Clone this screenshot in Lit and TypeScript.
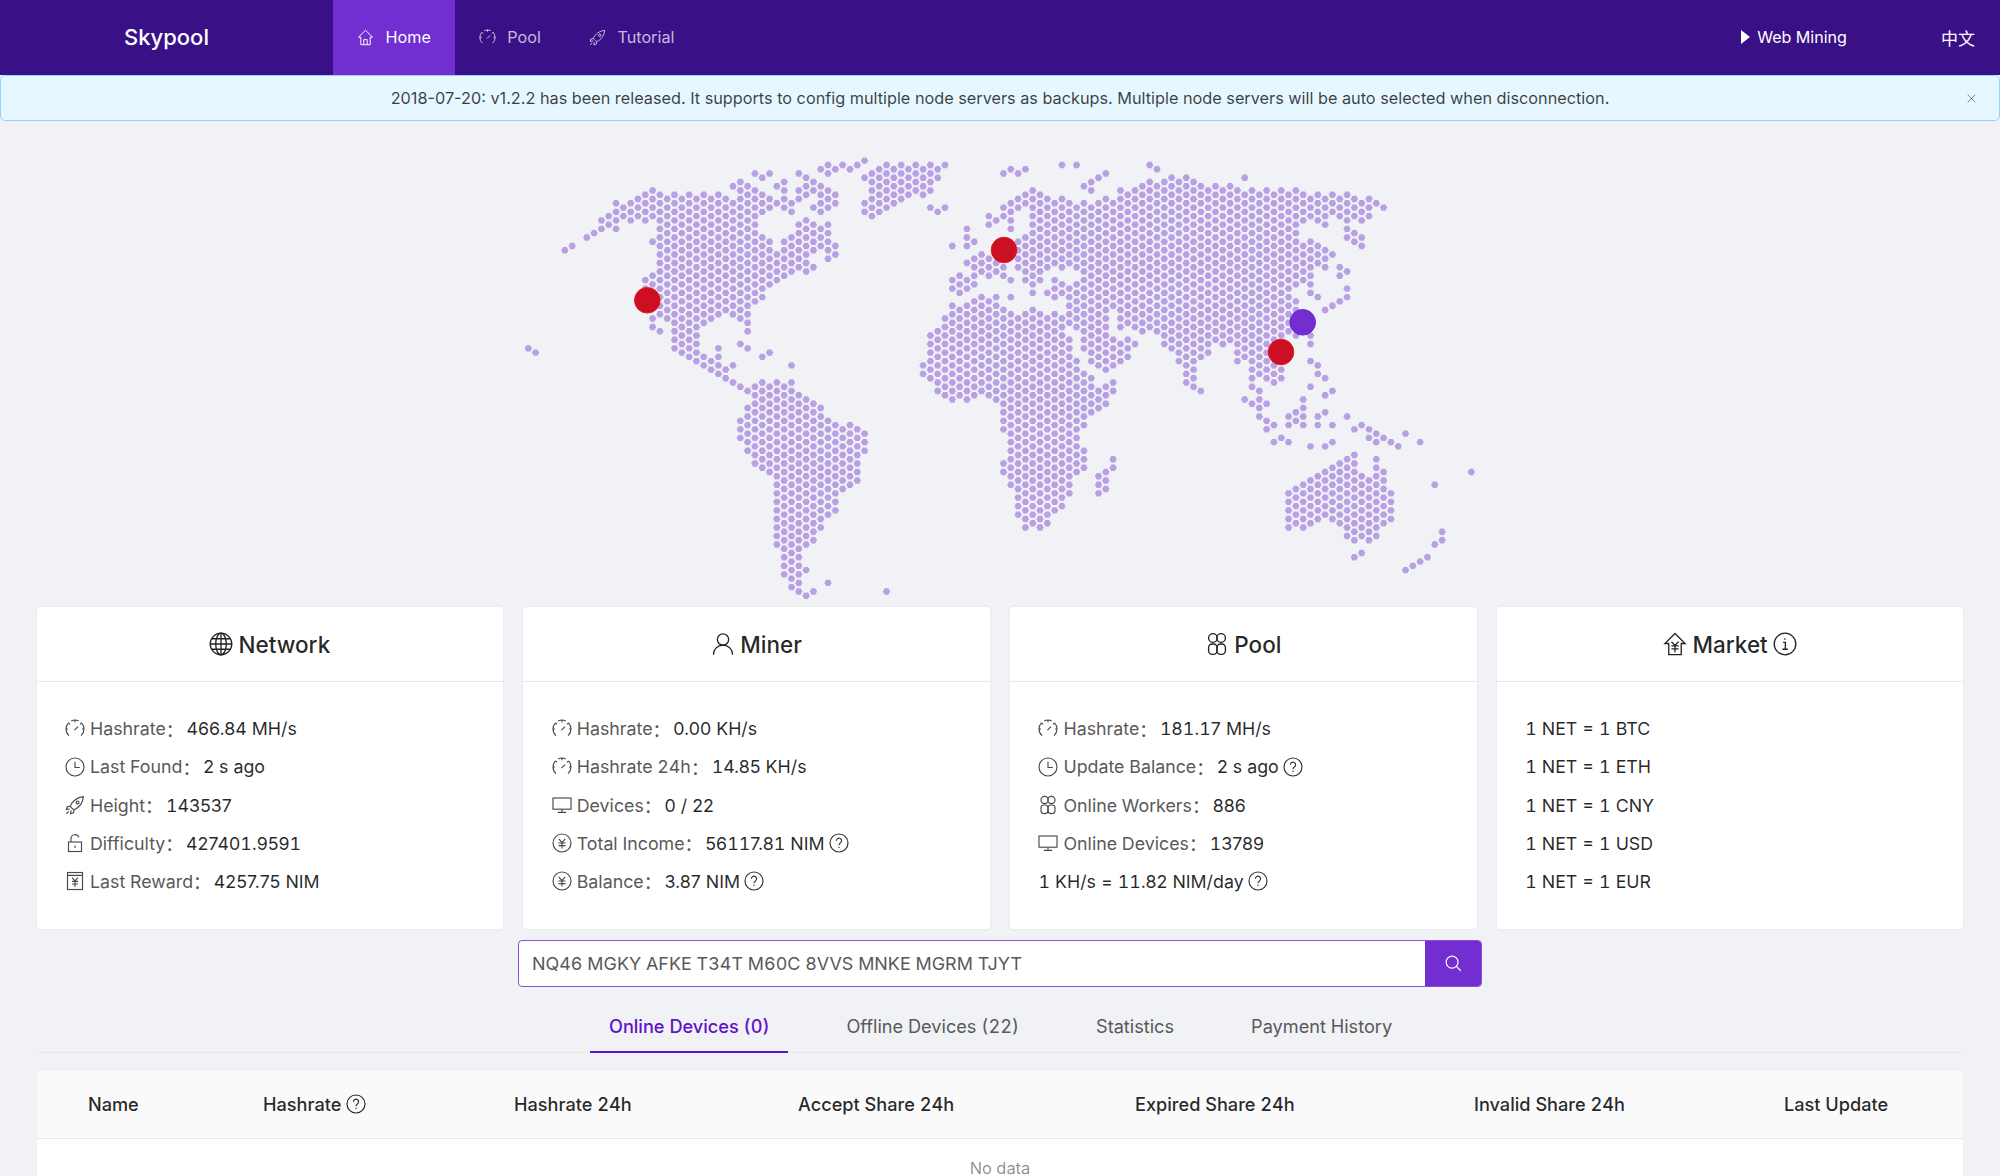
import { LitElement, html, css, svg, TemplateResult, SVGTemplateResult } from "lit";
import { customElement } from "lit/decorators.js";

const yen = svg`<path d="M6.8 5.8 10 9.6l3.2-3.8M6.5 10h7M6.5 12.6h7M10 9.6V15.5" />`;

const ICONS: Record<string, SVGTemplateResult> = {
  home: svg`<path d="M10 1.5 1.8 9.6h2.7V18.5h11V9.6h2.7zM8 18.5v-6h4v6" />`,
  gauge: svg`<path d="M3.9 16.6A9 9 0 0 1 1 10a9 9 0 0 1 2.5-6.2M6.2 1.9a9 9 0 0 1 7.6 0M16.5 3.8A9 9 0 0 1 19 10a9 9 0 0 1-2.9 6.6M1 10h2M17 10h2M3.5 3.8 5 5.3M16.5 3.8 15 5.3M10 1v2.2M9.4 11.2 13 7.6" />`,
  clock: svg`<circle cx="10" cy="10" r="9" /><path d="M10 4.8v5.7h4.8" />`,
  rocket: svg`<path d="M6.9 13.2 5 11.2C7.6 5.8 12 2.4 18.4 1.6 17.8 8 14.4 12.4 9 15zM5 11.2l-2.7.6L1.4 14.6l3.4-.6M9 15l-.5 2.8-2.9.9.5-3.3M1.3 18.8l2.4-2.4" /><circle cx="12.6" cy="7.4" r="1.4" />`,
  unlock: svg`<rect x="3.5" y="9" width="13" height="9.5" /><path d="M6 9V5.6a4 4 0 0 1 7.8-1.2M10 12.6v2.4" />`,
  receipt: svg`<rect x="2.5" y="1.5" width="15" height="17" /><path d="M2.5 4.4h15M7 6.6l3 3.4 3-3.4M7 10.4h6M7 13h6M10 10v6" />`,
  globe: svg`<circle cx="10" cy="10" r="9" /><ellipse cx="10" cy="10" rx="4.4" ry="9" /><path d="M1 10h18M2.2 5.6h15.6M2.2 14.4h15.6M10 1v18" />`,
  user: svg`<circle cx="10" cy="6.2" r="4.7" /><path d="M2 19c0-4.6 3.4-8.1 8-8.1s8 3.5 8 8.1" />`,
  team: svg`<circle cx="6.6" cy="5" r="3.6" /><circle cx="13.4" cy="5" r="3.6" /><rect x="3" y="10" width="7" height="8.6" rx="3" /><rect x="10" y="10" width="7" height="8.6" rx="3" />`,
  desktop: svg`<rect x="1" y="3" width="18" height="11.2" /><path d="M10 14.2V17M5.8 17.4h8.4" />`,
  yencircle: svg`<circle cx="10" cy="10" r="9" />${yen}`,
  question: svg`<circle cx="10" cy="10" r="9" /><path d="M7.4 7.7a2.6 2.6 0 1 1 4 2.2c-.9.6-1.4 1.1-1.4 2.3M10 13.8v1.2" />`,
  market: svg`<path d="M10 1.2 1.6 9.6h3.2v9.2h10.4V9.6h3.2zM7 8.2l3 3 3-3M7 11.6h6M7 14h6M10 11.2v5.6" />`,
  info: svg`<circle cx="10" cy="10" r="9" /><path d="M8.4 8.6h1.9v5.6M7.8 14.4h4.6M10 5.2v1.2" />`,
  search: svg`<circle cx="9" cy="9" r="6.6" /><path d="m13.8 13.8 4.8 4.8" />`,
  close: svg`<path d="m3 3 14 14M17 3 3 17" />`,
};

function icon(name: string, size: number, sw = 1.15): TemplateResult {
  return html`<svg
    class="icon"
    viewBox="0 0 20 20"
    width=${size}
    height=${size}
    fill="none"
    stroke="currentColor"
    stroke-width=${sw}
  >
    ${ICONS[name]}
  </svg>`;
}

// one string per dot row, "a-b" means every second column from a to b
const MAP_ROWS = [
  "46",
  "41 43 45 49-57 73 75 85",
  "40 42 44 48-56 66 68 86",
  "31 33 37 41 47-55 65 67 79",
  "32 38 46-56 78 88 90 98",
  "29 35 39 47-55 77 85-91",
  "28 30 34 38 40 48-54 76 84-96",
  "17 29 31 35 37 39 41 47-55 69 77 81-105",
  "16-26 30 32 38 40 42 48-54 68 70 82-112",
  "15-27 29-33 35 37 41 47-51 67-71 73 79 81-115",
  "12-36 40 42 46-50 66-116",
  "13-35 39 41 47 49 55 57 65 67 69-117",
  "12-32 36 40 46 48 56 66 70-114",
  "11-31 47 63 65 69-115",
  "10-30 38 64 66 70-106 108 112 114",
  "11 19-31 37 39 41 63 69-105 109",
  "10 12 18-30 38 40 60 66 70-104 112",
  "9 19-31 37 39 41 69-105 113",
  "8 18-32 36 38 40 60 68-104 112 114",
  "17 19-31 33 35 37 39 41 61 67-105 107 113",
  "6 18-32 36-42 58 60 68-106 108 114",
  "5 19-33 35-41 65-105 107 109",
  "18-34 36 38 42 62-110",
  "19-37 41 61-109",
  "18-38 60-64 68-108",
  "19-39 61 63 65-73 75-109 111",
  "18-38 62 64 68 70 76-106 112",
  "17-35 59 61 63 65 69 77-107 111",
  "16-34 58 60 66 68 70 72 76-106",
  "17-33 59 61 69 73-107",
  "16-32 58 60 72-104 112",
  "19-31 59 69-103 107",
  "18-32 62 64 66 72-104 108 112",
  "19-31 61 63 75-105 111",
  "18-30 58-64 74-104 110",
  "19-29 59-65 69 75-105 109",
  "18-26 28 30 58-72 74-78 82-104",
  "17-25 29 57-73 75-79 81-105",
  "20-24 30 58-72 74-78 82-106",
  "17 21 23 57-73 75-79 81 83 85-105",
  "18 20 22 30 56-72 76 78 84 86-104",
  "21 23 55-73 77 79 87-105 107",
  "20 22 56-74 76-82 88-102",
  "21 23 29 55-73 77-83 87-93 95 97-101 107",
  "0 20 22 26 30 56-74 76-82 88-92 98 100 102",
  "1 21 23 33 55-73 77-81 89 91 93 97-101",
  "22 24 26 32 56-74 78-82 90 92 98 100",
  "23 25 55-75 77-81 89 91 97-103 107",
  "24 26 28 36 54-74 78 80 90 100 102 108",
  "25 27 55-75 79 91 99-103",
  "26 54-76 90 100 102 108",
  "27 55-77 91 99-103 109",
  "28 32 34 36 56-76 80 90 102",
  "29-35 57-77 79 91 99 107",
  "30-36 56-78 80 92 100 110",
  "31-37 57-79 109",
  "32-38 58 60 64-78 98 100 106",
  "31-39 65-79 99 101",
  "30-40 66-78 100 106",
  "31-39 65-77 105 109",
  "30-40 66-76 100 104 106 108 112",
  "29-41 65-75 101 105",
  "30-42 44 66-76 102 104 106 108 110 114",
  "29-43 45 65-75 101 113 115",
  "30-46 66-74 116 120",
  "29-45 67-75 103 115 117",
  "30-46 66-74 102 104 110 116 118 122",
  "31-45 67-75 107 109 119",
  "30-46 66-76",
  "31-45 67-75 113",
  "32-44 66-76 80 112 116",
  "31-45 65-75 111 113",
  "32-44 66-76 80 110 112 116",
  "33-45 65-75 79 109-113 117 129",
  "34-44 66-74 78 108-114 116",
  "35-45 67-73 79 107-115 117",
  "34-44 66-74 78 106-116 124",
  "35-43 67-73 79 105-117",
  "34-42 68-74 78 104-118",
  "35-41 67-73 105-117",
  "34-42 68-72 104-118",
  "35-41 67-73 105-117",
  "34-42 68-72 104-118",
  "35-41 67-71 105-117",
  "34-40 68 70 104-108 110-118",
  "35-39 69 71 105 107 111-117",
  "34-40 68 70 104 106 112-116",
  "35-39 113 115 125",
  "34-38 112-116",
  "35-39 113 115 125",
  "34-38 124",
  "35 37",
  "36 114",
  "35 37 113 123",
  "36 122",
  "35 37 121",
  "36 38 120",
  "35 37",
  "36",
  "37 41",
  "36",
  "37 39 49",
  "38",
];

function dotsPath(): string {
  const parts: string[] = [];
  MAP_ROWS.forEach((row, r) => {
    for (const token of row.split(" ")) {
      const [from, to] = token.split("-").map(Number);
      for (let c = from; c <= (to ?? from); c += 2) {
        const x = (528.33 + c * 7.31).toFixed(2);
        const y = (160.67 + r * 4.265).toFixed(2);
        parts.push(`M${x} ${y}m-3.7 0l1.85-3.2h3.7l1.85 3.2l-1.85 3.2h-3.7z`);
      }
    }
  });
  return parts.join("");
}

interface Row {
  icon?: string;
  label?: string;
  value: string;
  help?: boolean;
}

interface Card {
  icon: string;
  title: string;
  titleInfo?: boolean;
  rows: Row[];
}

const CARDS: Card[] = [
  {
    icon: "globe",
    title: "Network",
    rows: [
      { icon: "gauge", label: "Hashrate", value: "466.84 MH/s" },
      { icon: "clock", label: "Last Found", value: "2 s ago" },
      { icon: "rocket", label: "Height", value: "143537" },
      { icon: "unlock", label: "Difficulty", value: "427401.9591" },
      { icon: "receipt", label: "Last Reward", value: "4257.75 NIM" },
    ],
  },
  {
    icon: "user",
    title: "Miner",
    rows: [
      { icon: "gauge", label: "Hashrate", value: "0.00 KH/s" },
      { icon: "gauge", label: "Hashrate 24h", value: "14.85 KH/s" },
      { icon: "desktop", label: "Devices", value: "0 / 22" },
      { icon: "yencircle", label: "Total Income", value: "56117.81 NIM", help: true },
      { icon: "yencircle", label: "Balance", value: "3.87 NIM", help: true },
    ],
  },
  {
    icon: "team",
    title: "Pool",
    rows: [
      { icon: "gauge", label: "Hashrate", value: "181.17 MH/s" },
      { icon: "clock", label: "Update Balance", value: "2 s ago", help: true },
      { icon: "team", label: "Online Workers", value: "886" },
      { icon: "desktop", label: "Online Devices", value: "13789" },
      { value: "1 KH/s = 11.82 NIM/day", help: true },
    ],
  },
  {
    icon: "market",
    title: "Market",
    titleInfo: true,
    rows: [
      { value: "1 NET = 1 BTC" },
      { value: "1 NET = 1 ETH" },
      { value: "1 NET = 1 CNY" },
      { value: "1 NET = 1 USD" },
      { value: "1 NET = 1 EUR" },
    ],
  },
];

const COLUMNS = [
  "Name",
  "Hashrate",
  "Hashrate 24h",
  "Accept Share 24h",
  "Expired Share 24h",
  "Invalid Share 24h",
  "Last Update",
];

@customElement("app-root")
export class AppRoot extends LitElement {
  static styles = css`
    :host {
      display: block;
      width: 2000px;
      height: 1176px;
      overflow: hidden;
      background: #f0f2f5;
      font-family: Inter, "Noto Sans CJK SC", sans-serif;
      font-size: 17.8px;
      font-variant-numeric: tabular-nums;
      color: rgba(0, 0, 0, 0.85);
    }
    .icon {
      display: block;
      flex: none;
    }
    header {
      display: flex;
      align-items: stretch;
      height: 75px;
      background: #391085;
      color: #fff;
    }
    .logo {
      width: 333px;
      padding: 0 0 2px 124px;
      box-sizing: border-box;
      align-self: center;
      font-size: 22px;
      font-weight: 500;
      white-space: nowrap;
    }
    .nav {
      display: flex;
      align-items: center;
      gap: 11.5px;
      padding: 0 24px 1px;
      font-size: 16.2px;
      color: rgba(255, 255, 255, 0.72);
    }
    .nav.active {
      background: #722ed1;
      color: #fff;
    }
    .spacer {
      flex: 1;
    }
    .mining {
      display: flex;
      align-items: center;
      gap: 7px;
      padding-bottom: 1px;
      font-size: 16.1px;
    }
    .tri {
      width: 0;
      height: 0;
      border-left: 9px solid #fff;
      border-top: 7.5px solid transparent;
      border-bottom: 7.5px solid transparent;
    }
    .lang {
      display: flex;
      align-items: center;
      margin-left: 94px;
      padding: 0 25px 1px 0;
      font-size: 17px;
    }
    .alert {
      position: relative;
      display: flex;
      align-items: center;
      justify-content: center;
      height: 46px;
      box-sizing: border-box;
      padding-bottom: 1px;
      background: #e6f7ff;
      border: 1px solid #91d5ff;
      border-radius: 5px;
      font-size: 16.25px;
      font-variant-numeric: normal;
      color: rgba(0, 0, 0, 0.75);
    }
    .alert .close {
      position: absolute;
      right: 22px;
      top: 17px;
      color: rgba(0, 0, 0, 0.5);
    }
    .map {
      display: block;
    }
    .cards {
      display: grid;
      grid-template-columns: repeat(4, 1fr);
      gap: 20.4px;
      padding: 0 36.7px;
    }
    .card {
      height: 322px;
      box-sizing: border-box;
      background: #fff;
      border-radius: 3px;
      box-shadow: 0 0 2px rgba(0, 0, 0, 0.1);
    }
    .card-title {
      display: flex;
      align-items: center;
      justify-content: center;
      gap: 5px;
      height: 75px;
      box-sizing: border-box;
      border-bottom: 1px solid #e8e8e8;
      font-size: 22.5px;
      font-weight: 500;
    }
    .card-title .icon {
      color: #222;
    }
    .card-body {
      display: flex;
      flex-direction: column;
      padding: 27.6px 28.3px 0;
    }
    .row {
      display: flex;
      align-items: center;
      height: 38.2px;
      white-space: nowrap;
    }
    .row .lead {
      margin-right: 5px;
      color: #4a4a4a;
    }
    .label {
      color: #595959;
    }
    .colon {
      color: #595959;
      margin-right: 3px;
    }
    .value {
      font-variant-numeric: normal;
    }
    .one {
      font-variant-numeric: tabular-nums;
    }
    .help {
      margin-left: 4px;
      color: #333;
    }
    .search {
      display: flex;
      height: 47px;
      box-sizing: border-box;
      width: 964px;
      margin: 10.7px 0 0 518px;
      border: 1px solid #8a4fdc;
      border-radius: 4px;
      background: #fff;
      overflow: hidden;
    }
    .search .text {
      flex: 1;
      display: flex;
      align-items: center;
      padding-left: 13px;
      font-size: 17.95px;
      color: #595959;
    }
    .search .btn {
      width: 56px;
      display: flex;
      align-items: center;
      justify-content: center;
      background: #722ed1;
      color: #fff;
    }
    .tabs {
      display: flex;
      justify-content: flex-start;
      gap: 39px;
      margin: 18px 36.7px 0;
      padding-left: 553.3px;
      height: 47px;
      border-bottom: 1px solid #e8e8e8;
      font-size: 18.15px;
      color: #595959;
    }
    .tab {
      display: flex;
      align-items: center;
      padding: 0 19px 6px;
      margin-bottom: -1px;
      height: 48px;
      box-sizing: border-box;
    }
    .tab.active {
      color: #6110cb;
      font-weight: 500;
      padding-bottom: 3.5px;
      border-bottom: 2.5px solid #6110cb;
    }
    .table {
      margin: 18px 36.7px 0;
      background: #fff;
      border-radius: 5px 5px 0 0;
      overflow: hidden;
    }
    .thead {
      display: grid;
      grid-template-columns: 175px 251px 284px 337px 339px 310px auto;
      align-items: center;
      height: 68px;
      box-sizing: border-box;
      padding-left: 51.3px;
      background: #fafafa;
      border-bottom: 1px solid #e8e8e8;
      font-size: 18.15px;
      font-weight: 500;
    }
    .th {
      display: flex;
      align-items: center;
      gap: 5px;
      white-space: nowrap;
    }
    .empty {
      padding-top: 19px;
      height: 60px;
      text-align: center;
      font-size: 16.4px;
      color: rgba(0, 0, 0, 0.45);
    }
  `;

  // the reference font has a wide "1", plain Inter digits are otherwise right
  private renderValue(value: string): TemplateResult {
    return html`<span class="value"
      >${value
        .split(/(1)/)
        .map((part) => (part === "1" ? html`<span class="one">1</span>` : part))}</span
    >`;
  }

  private renderRow(row: Row): TemplateResult {
    return html`<div class="row">
      ${row.icon ? html`<span class="lead">${icon(row.icon, 20)}</span>` : ""}
      ${row.label
        ? html`<span class="label">${row.label}</span><span class="colon">：</span>`
        : ""}
      ${this.renderValue(row.value)}
      ${row.help ? html`<span class="help">${icon("question", 20)}</span>` : ""}
    </div>`;
  }

  private renderCard(card: Card): TemplateResult {
    return html`<div class="card">
      <div class="card-title">
        ${icon(card.icon, 24, 1.1)}
        <span>${card.title}</span>
        ${card.titleInfo ? icon("info", 24, 1.1) : ""}
      </div>
      <div class="card-body">${card.rows.map((r) => this.renderRow(r))}</div>
    </div>`;
  }

  protected render(): TemplateResult {
    return html`
      <header>
        <div class="logo">Skypool</div>
        <div class="nav active">${icon("home", 17)}<span>Home</span></div>
        <div class="nav">${icon("gauge", 17)}<span>Pool</span></div>
        <div class="nav">${icon("rocket", 17)}<span>Tutorial</span></div>
        <div class="spacer"></div>
        <div class="mining"><span class="tri"></span><span>Web Mining</span></div>
        <div class="lang">中文</div>
      </header>
      <div class="alert">
        <span
          >2018-07-20: v1.2.2 has been released. It supports to config multiple
          node servers as backups. Multiple node servers will be auto selected
          when disconnection.</span
        >
        <span class="close">${icon("close", 11, 1.6)}</span>
      </div>
      <svg class="map" width="2000" height="486" viewBox="0 121 2000 486">
        <path d=${dotsPath()} fill="#b9a0e4" />
        <circle cx="647.3" cy="300.3" r="12.8" fill="#cc1021" stroke="#e4162a" />
        <circle cx="1004" cy="250" r="12.8" fill="#cc1021" stroke="#e4162a" />
        <circle cx="1281" cy="352" r="12.8" fill="#cc1021" stroke="#e4162a" />
        <circle cx="1302.7" cy="322.3" r="12.8" fill="#722ed1" stroke="#6a1fd0" />
      </svg>
      <div class="cards">${CARDS.map((c) => this.renderCard(c))}</div>
      <div class="search">
        <div class="text">NQ46 MGKY AFKE T34T M60C 8VVS MNKE MGRM TJYT</div>
        <div class="btn">${icon("search", 18, 1.3)}</div>
      </div>
      <div class="tabs">
        <div class="tab active">Online Devices (0)</div>
        <div class="tab">Offline Devices (22)</div>
        <div class="tab">Statistics</div>
        <div class="tab">Payment History</div>
      </div>
      <div class="table">
        <div class="thead">
          ${COLUMNS.map(
            (name) => html`<div class="th">
              <span>${name}</span>
              ${name === "Hashrate" ? icon("question", 20) : ""}
            </div>`
          )}
        </div>
        <div class="empty">No data</div>
      </div>
    `;
  }
}
